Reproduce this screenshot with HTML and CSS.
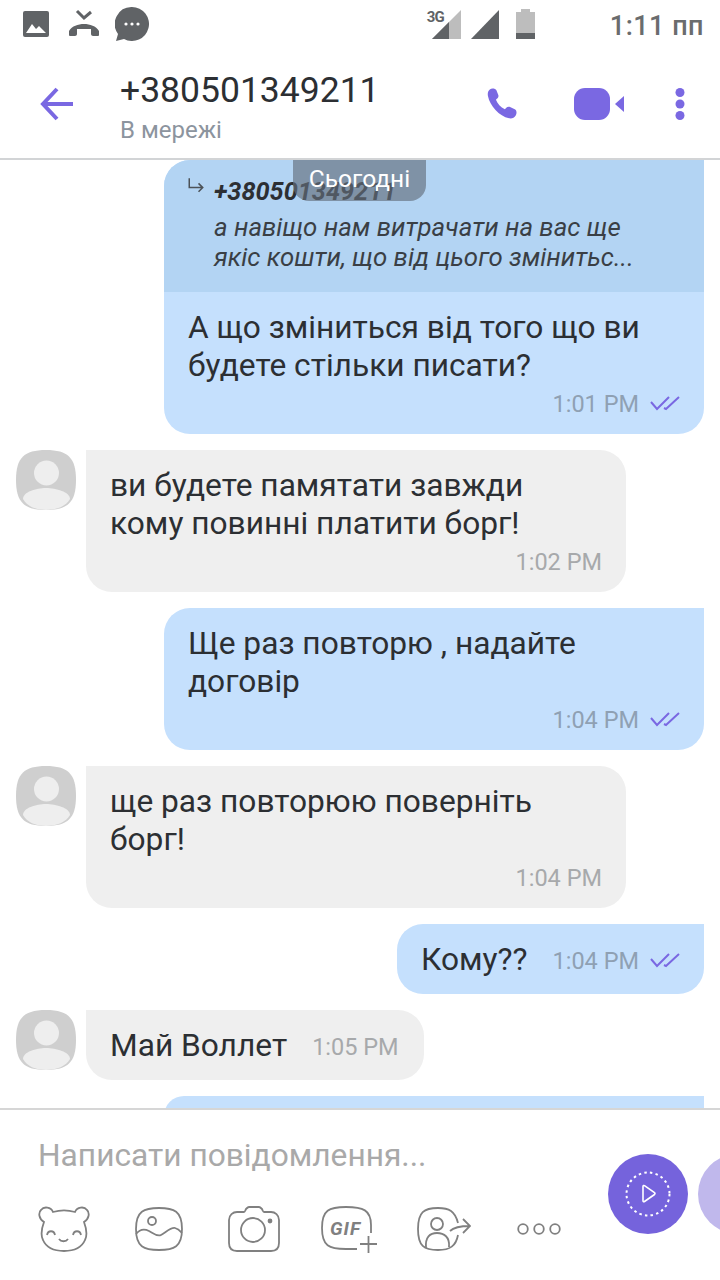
FILE: index.html
```html
<!DOCTYPE html>
<html lang="uk">
<head>
  <meta charset="UTF-8">
  <title>Viber</title>
  <link rel="stylesheet" href="styles.css">
</head>
<body>
  <div class="statusbar">
    <div class="status-left">
      <svg width="28" height="28" viewBox="0 0 28 28"><rect x="1" y="1" width="26" height="26" rx="2" fill="#606366"/><path d="M4 23 10 14l4 5 3-3 7 7z" fill="#fff"/></svg>
      <svg width="32" height="30" viewBox="0 0 32 30"><path d="M9 2l7 7 7-6" fill="none" stroke="#606366" stroke-width="3"/><path d="M1 26v-4c3-5 9-7 15-7s12 2 15 7v4c0 1-1 1-2 1h-4c-1 0-2-1-2-2v-3c-4-2-10-2-14 0v3c0 1-1 2-2 2H3c-1 0-2 0-2-1z" fill="#606366"/><path d="M9 20h14v3H9z" fill="#fff"/></svg>
      <svg class="status-chat" width="34" height="34" viewBox="0 0 34 34"><path d="M17 0a17 17 0 1 1-8 32l-8 2 2-7A17 17 0 0 1 17 0z" fill="#606366"/><circle cx="11" cy="17" r="1.600" fill="#fff"/><circle cx="17" cy="17" r="1.600" fill="#fff"/><circle cx="23" cy="17" r="1.600" fill="#fff"/></svg>
    </div>
    <div class="status-right">
      <div class="signal-3g">
        <span class="label-3g">3G</span>
        <svg width="29" height="29" viewBox="0 0 29 29"><path d="M0 29 29 0v29z" fill="#bdbdbd"/><path d="M0 29 17 12v17z" fill="#606366"/></svg>
      </div>
      <svg class="signal" width="28" height="29" viewBox="0 0 28 29"><path d="M0 29 28 0v29z" fill="#606366"/></svg>
      <svg class="battery" width="19" height="30" viewBox="0 0 19 30"><path d="M0 3h5V0h9v3h5v27H0z" fill="#bdbdbd"/><path d="M0 24h19v6H0z" fill="#606366"/></svg>
      <span class="clock">1:11 пп</span>
    </div>
  </div>

  <header class="chat-header">
    <svg class="back-icon" width="36" height="34" viewBox="0 0 36 34"><path d="M33 17H3M17 2 3 17l14 15" fill="none" stroke="#7a68e2" stroke-width="4"/></svg>
    <div class="contact">
      <div class="contact-name">+380501349211</div>
      <div class="contact-status">В мережі</div>
    </div>
    <div class="header-actions">
      <svg width="32" height="32" viewBox="0 0 34 34"><path d="M3 1.500c2-1.500 6-1 7 1l2 5c.5 1.500 0 3-1.500 4l-1 1c1.500 4 5 8 9.500 10l1.500-1.500c1-1 2.500-1.300 4-.8l5 2.500c2 1 2.500 4 1 6.500-1.500 2.500-4 3.500-7 3C13 30 3 19 1 8.500 .5 5.500 1 3 3 1.500z" fill="#7a68e2"/></svg>
      <svg class="video-icon" width="50" height="32" viewBox="0 0 50 32"><rect width="36" height="32" rx="11" fill="#7a68e2"/><path d="M50 8v16l-9-8z" fill="#7a68e2"/></svg>
      <svg class="more-icon" width="10" height="32" viewBox="0 0 10 32"><circle cx="5" cy="4.500" r="4.500" fill="#7a68e2"/><circle cx="5" cy="16" r="4.500" fill="#7a68e2"/><circle cx="5" cy="27.500" r="4.500" fill="#7a68e2"/></svg>
    </div>
  </header>

  <main class="messages">
    <div class="date-chip">Сьогодні</div>

    <div class="bubble out">
      <div class="quote">
        <svg class="quote-arrow" width="16" height="15" viewBox="0 0 19 17"><path d="M1.500 0v11h16M12.500 6l5 5-5 5" fill="none" stroke="#4c5258" stroke-width="1.800"/></svg>
        <div class="quote-name">+380501349211</div>
        <div class="quote-text">а навіщо нам витрачати на вас ще<br>якіс кошти, що від цього змінитьс...</div>
      </div>
      <div class="bubble-body">
        <div class="text">А що зміниться від того що ви<br>будете стільки писати?</div>
        <div class="meta">
          <span class="time">1:01 PM</span>
          <svg class="ticks" width="30" height="16" viewBox="0 0 30 16"><path d="M1 7l6 7L19 2M14 13l2 1L29 2" fill="none" stroke="#7a68e2" stroke-width="2"/></svg>
        </div>
      </div>
    </div>

    <div class="row-in">
      <svg class="avatar" width="60" height="60" viewBox="0 0 60 60"><path d="M30 0c22 0 30 8 30 30s-8 30-30 30S0 52 0 30 8 0 30 0z" fill="#cfcfcf"/><circle cx="30.500" cy="23" r="12.500" fill="#eeeeee"/><path d="M7 49c0-7 13-11 23-11s24 4 24 11c-4 7-13 11-24 11S11 56 7 49z" fill="#eeeeee"/></svg>
      <div class="bubble in">
        <div class="bubble-body">
          <div class="text">ви будете памятати завжди<br>кому повинні платити борг!</div>
          <div class="meta"><span class="time">1:02 PM</span></div>
        </div>
      </div>
    </div>

    <div class="bubble out">
      <div class="bubble-body">
        <div class="text">Ще раз повторю , надайте<br>договір</div>
        <div class="meta">
          <span class="time">1:04 PM</span>
          <svg class="ticks" width="30" height="16" viewBox="0 0 30 16"><path d="M1 7l6 7L19 2M14 13l2 1L29 2" fill="none" stroke="#7a68e2" stroke-width="2"/></svg>
        </div>
      </div>
    </div>

    <div class="row-in">
      <svg class="avatar" width="60" height="60" viewBox="0 0 60 60"><path d="M30 0c22 0 30 8 30 30s-8 30-30 30S0 52 0 30 8 0 30 0z" fill="#cfcfcf"/><circle cx="30.500" cy="23" r="12.500" fill="#eeeeee"/><path d="M7 49c0-7 13-11 23-11s24 4 24 11c-4 7-13 11-24 11S11 56 7 49z" fill="#eeeeee"/></svg>
      <div class="bubble in">
        <div class="bubble-body">
          <div class="text">ще раз повторюю поверніть<br>борг!</div>
          <div class="meta"><span class="time">1:04 PM</span></div>
        </div>
      </div>
    </div>

    <div class="bubble out short">
      <div class="bubble-body inline">
        <div class="text">Кому??</div>
        <div class="meta">
          <span class="time">1:04 PM</span>
          <svg class="ticks" width="30" height="16" viewBox="0 0 30 16"><path d="M1 7l6 7L19 2M14 13l2 1L29 2" fill="none" stroke="#7a68e2" stroke-width="2"/></svg>
        </div>
      </div>
    </div>

    <div class="row-in">
      <svg class="avatar" width="60" height="60" viewBox="0 0 60 60"><path d="M30 0c22 0 30 8 30 30s-8 30-30 30S0 52 0 30 8 0 30 0z" fill="#cfcfcf"/><circle cx="30.500" cy="23" r="12.500" fill="#eeeeee"/><path d="M7 49c0-7 13-11 23-11s24 4 24 11c-4 7-13 11-24 11S11 56 7 49z" fill="#eeeeee"/></svg>
      <div class="bubble in short">
        <div class="bubble-body inline">
          <div class="text">Май Воллет</div>
          <div class="meta"><span class="time">1:05 PM</span></div>
        </div>
      </div>
    </div>

    <div class="bubble out stub"></div>
  </main>

  <footer class="composer">
    <div class="placeholder">Написати повідомлення...</div>
    <div class="tools">
      <svg width="52" height="46" viewBox="0 0 52 46" fill="none" stroke="#808080" stroke-width="1.800"><path d="M6 16C1 13 0 7 3 4 6 0 13 1 15 6c7-2 15-2 22 0 2-5 9-6 12-2 3 3 2 9-3 12 3 8 3 14 1 18-3 7-11 11-21 11S8 41 5 34c-2-4-2-10 1-18z"/><path d="M9 29c1-5 7-5 8 0M35 29c1-5 7-5 8 0M21 33c2 3 7 3 9 0"/></svg>
      <svg width="48" height="44" viewBox="0 0 48 44" fill="none" stroke="#808080" stroke-width="1.800"><path d="M24 1c15 0 23 3 23 21s-8 21-23 21S1 40 1 22 9 1 24 1z"/><circle cx="17" cy="14" r="4"/><path d="M1 27c4-5 9-5 13-3s8 6 12 4 10-8 14-7 6 4 7 5"/></svg>
      <svg width="52" height="46" viewBox="0 0 52 46" fill="none" stroke="#808080" stroke-width="1.800"><path d="M9 6h7c1 0 1-1 2-3 1-1 2-2 3-2h10c1 0 2 1 3 2 1 2 1 3 2 3h7c4 0 8 3 8 8v23c0 5-3 8-8 8H9c-5 0-8-3-8-8V14c0-5 4-8 8-8z"/><circle cx="25" cy="24" r="12"/><circle cx="42" cy="15" r="1.500" fill="#808080"/></svg>
      <div class="gif-icon">
        <svg width="56" height="48" viewBox="0 0 56 48" fill="none" stroke="#808080" stroke-width="1.800"><path d="M50 28V20C50 5 42 2 25 2S1 5 1 23s7 21 24 21h11"/><path d="M39 39h17M47.500 31v17"/></svg>
        <span class="gif-label">GIF</span>
      </div>
      <svg width="54" height="44" viewBox="0 0 54 44" fill="none" stroke="#808080" stroke-width="1.800"><path d="M41 16C38 4 32 1 21 1 7 1 1 5 1 22s6 21 20 21c12 0 18-4 20-15"/><circle cx="20" cy="17" r="6"/><path d="M9 41c-1-11 4-15 11-15s13 4 12 14"/><path d="M33 24c4-4 10-5 20-5M46 12l7 7-7 7"/></svg>
      <svg class="dots-icon" width="44" height="12" viewBox="0 0 44 12" fill="none" stroke="#808080" stroke-width="1.800"><circle cx="6" cy="6" r="4.800"/><circle cx="22" cy="6" r="4.800"/><circle cx="38" cy="6" r="4.800"/></svg>
    </div>
    <div class="send-btn">
      <svg width="46" height="46" viewBox="0 0 46 46" fill="none"><circle cx="23" cy="23" r="21.500" stroke="#fff" stroke-width="2" stroke-dasharray="2.500 3.200"/><path d="M18 15.500c0-1 .8-1.300 1.500-.8l10 7c.7.600.7 1.200 0 1.800l-10 7c-.7.500-1.500.2-1.500-.8z" stroke="#fff" stroke-width="1.600"/></svg>
    </div>
    <div class="send-btn-next"></div>
  </footer>
</body>
</html>
```

FILE: styles.css
```css
* {
  box-sizing: border-box;
}

html, body {
  margin: 0;
  height: 1280px;
  overflow: hidden;
}

body {
  width: 720px;
  background-color: white;
  font-family: Roboto, "Noto Sans", sans-serif;
  color: #2c2f33;
  display: flex;
  flex-direction: column;
}

/* status bar */
.statusbar {
  height: 48px;
  flex: none;
  display: flex;
  justify-content: space-between;
  align-items: center;
  padding: 0 16px 0 22px;
}

.status-left {
  display: flex;
  align-items: center;
  gap: 18px;
}

.status-chat {
  margin-left: -3px;
}

.status-right {
  display: flex;
  align-items: center;
}

.signal-3g {
  position: relative;
  width: 29px;
  height: 29px;
}

.label-3g {
  position: absolute;
  left: -5px;
  top: -2px;
  font-size: 15px;
  letter-spacing: -1px;
  font-weight: bold;
  color: #606366;
}

.signal {
  margin-left: 10px;
}

.battery {
  margin-left: 17px;
}

.clock {
  font-size: 27px;
  font-weight: 500;
  color: #6a6c6e;
  margin: 4px 0 0 75px;
  letter-spacing: 0.5px;
}

/* header */
.chat-header {
  height: 112px;
  flex: none;
  display: flex;
  align-items: center;
  padding: 2px 35px 0 40px;
  border-bottom: 2px solid #d2d4d6;
}

.back-icon {
  flex: none;
}

.contact {
  margin: 6px 0 0 44px;
  flex: 1;
}

.contact-name {
  font-size: 35.500px;
  line-height: 42px;
}

.contact-status {
  font-size: 24px;
  line-height: 30px;
  margin-top: 4px;
  color: #8c949e;
}

.header-actions {
  display: flex;
  align-items: center;
}

.video-icon {
  margin-left: 55px;
}

.more-icon {
  margin-left: 51px;
}

/* messages */
.messages {
  position: relative;
  height: 948px;
  flex: none;
  overflow: hidden;
  display: flex;
  flex-direction: column;
  gap: 16px;
  padding: 0 16px;
}

.date-chip {
  position: absolute;
  z-index: 2;
  left: 293px;
  top: 0;
  width: 133px;
  height: 41px;
  background-color: rgba(100, 110, 125, 0.65);
  border-radius: 0 0 16px 16px;
  color: white;
  font-size: 24.500px;
  line-height: 37px;
  text-align: center;
}

.bubble {
  width: 540px;
  flex: none;
  overflow: hidden;
}

.bubble.out {
  align-self: flex-end;
  background-color: #c5e0fd;
  border-radius: 26px 0 26px 26px;
}

.bubble.in {
  background-color: #efefef;
  border-radius: 0 26px 26px 26px;
}

.bubble.short {
  width: auto;
}

.bubble.stub {
  height: 40px;
}

.row-in {
  display: flex;
  gap: 10px;
  flex: none;
}

.avatar {
  flex: none;
}

.quote {
  position: relative;
  height: 132px;
  background-color: #b3d4f3;
  padding: 18px 0 0 50px;
}

.quote-arrow {
  position: absolute;
  left: 24px;
  top: 18px;
}

.quote-name {
  font-size: 25.300px;
  line-height: 28px;
  font-style: italic;
  font-weight: bold;
}

.quote-text {
  margin-top: 6px;
  font-size: 25.800px;
  line-height: 30px;
  font-style: italic;
  white-space: nowrap;
  color: #3a3f45;
}

.bubble-body {
  padding: 17px 24px 13px;
}

.bubble-body.inline {
  display: flex;
  align-items: center;
  gap: 25px;
  padding-bottom: 15px;
}

.bubble.in .inline {
  padding-right: 25px;
}

.text {
  font-size: 31.700px;
  line-height: 38px;
  white-space: nowrap;
}

.meta {
  height: 36px;
  display: flex;
  justify-content: flex-end;
  align-items: center;
  gap: 11px;
}

.time {
  font-size: 23.500px;
  position: relative;
  top: 1px;
  color: #8fa0b3;
}

.bubble.in .time {
  color: #a7a9ab;
}

.ticks {
  flex: none;
}

/* composer */
.composer {
  position: relative;
  flex: 1;
  overflow: hidden;
  border-top: 2px solid #d6d6d6;
  padding: 27px 0 0 38px;
}

.placeholder {
  font-size: 31.700px;
  line-height: 38px;
  color: #a9a9a9;
}

.tools {
  display: flex;
  align-items: center;
  gap: 45px;
  margin-top: 30px;
}

.gif-icon {
  position: relative;
  width: 56px;
  height: 48px;
  margin: 0 -5px 0 -4px;
}

.gif-label {
  position: absolute;
  left: 9px;
  top: 12px;
  font-size: 19px;
  line-height: 24px;
  letter-spacing: 1px;
  font-weight: bold;
  font-style: italic;
  color: #808080;
}

.dots-icon {
  margin-left: 1px;
}

.send-btn, .send-btn-next {
  position: absolute;
  top: 44px;
  width: 80px;
  height: 80px;
  border-radius: 50%;
}

.send-btn {
  left: 608px;
  background-color: #7563dc;
  display: flex;
  align-items: center;
  justify-content: center;
}

.send-btn-next {
  left: 698px;
  background-color: #c0b8ec;
}
```
